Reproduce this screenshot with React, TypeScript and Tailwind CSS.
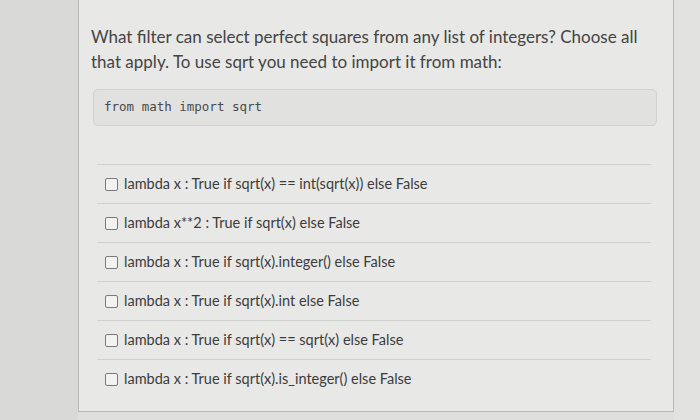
const options = [
  "lambda x : True if sqrt(x) == int(sqrt(x)) else False",
  "lambda x**2 : True if sqrt(x) else False",
  "lambda x : True if sqrt(x).integer() else False",
  "lambda x : True if sqrt(x).int else False",
  "lambda x : True if sqrt(x) == sqrt(x) else False",
  "lambda x : True if sqrt(x).is_integer() else False",
];

export default function App() {
  return (
    <div
      className="w-[700px] h-[420px] overflow-hidden bg-[#dfdfdd] flex"
      style={{ fontFamily: "Lato, 'Open Sans', sans-serif" }}
    >
      <div className="w-[78px] shrink-0 bg-[#d9d9d7]" />
      <div className="w-[596px] h-[412px] bg-[#e8e8e6] border-r border-b border-l border-[#b9b9b7] px-[12px] pt-[24px]">
        <p className="text-[17px] leading-[25px] text-[#444444] whitespace-nowrap">
          What filter can select perfect squares from any list of integers? Choose all
          <br />
          that apply. To use sqrt you need to import it from math:
        </p>
        <div className="mt-[15px] h-[37px] ml-[2px] mr-[4px] rounded-[5px] border border-[#d2d2d0] bg-[#e1e1df] flex items-center px-[10px]">
          <span
            className="text-[12.5px] text-[#4a4a4a]"
            style={{ fontFamily: "'DejaVu Sans Mono', monospace" }}
          >
            from math import sqrt
          </span>
        </div>
        <div className="mt-[38px] ml-[6px] mr-[10px]">
          {options.map((o, i) => (
            <div
              key={i}
              className="h-[39px] border-t border-[#d0d0ce] flex items-center gap-[6px] pl-[8px]"
            >
              <span className="w-[13px] h-[13px] rounded-[2px] border-[1.5px] border-[#7a7a7a] bg-[#f2f2f0] shrink-0" />
              <span className="text-[14.5px] text-[#3c3c3c]">{o}</span>
            </div>
          ))}
        </div>
      </div>
      <div className="flex-1 bg-[#e2e2e0]" />
    </div>
  );
}
